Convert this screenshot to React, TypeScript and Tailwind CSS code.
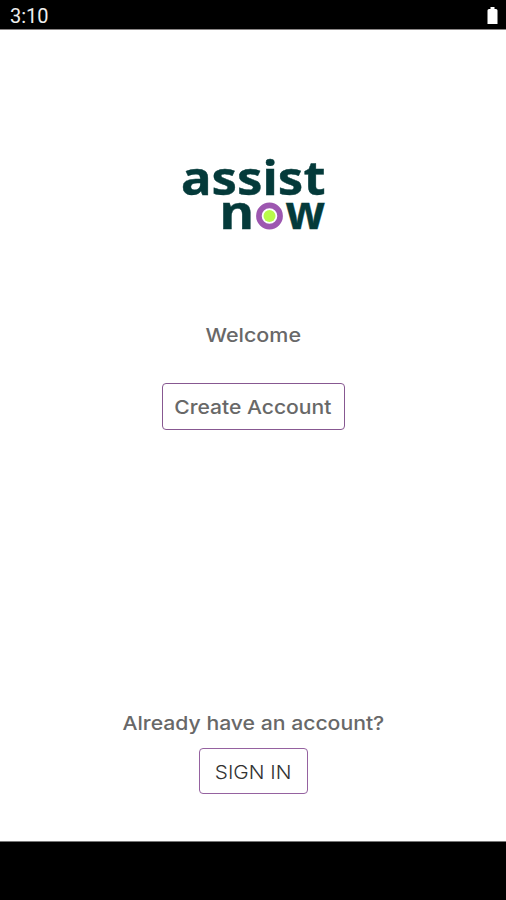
function Logo() {
  return (
    <svg className="mt-[110px] block h-[110px] w-[170px] shrink-0 overflow-visible" viewBox="168 140 170 110" role="img" aria-label="assist now">
      <g fill="#043a3a" stroke="#043a3a" strokeWidth="0.4" fontFamily="'Noto Sans', 'Open Sans', sans-serif" fontWeight="700" fontSize="47">
        <text x="181" y="194.600" textLength="144.500" lengthAdjust="spacingAndGlyphs">assist</text>
        <text x="219.500" y="229" textLength="34.500" lengthAdjust="spacingAndGlyphs">n</text>
        <text x="285.500" y="229" textLength="39.500" lengthAdjust="spacingAndGlyphs">w</text>
      </g>
      <circle cx="269.5" cy="216" r="10.600" fill="white" stroke="#9d57b0" strokeWidth="5.600" />
      <circle cx="269.5" cy="216" r="6" fill="#b9fb4b" />
    </svg>
  );
}

export default function App() {
  return (
    <div className="flex h-[900px] w-full flex-col bg-white font-[Inter,sans-serif] text-[#686868]">
      <header className="flex h-[30px] shrink-0 items-center justify-between border-b border-[#8a8686] bg-black pt-[3px] pr-[8px] pl-[10px] text-white">
        <span className="font-[Roboto,sans-serif] text-[20px] leading-[28px] text-[#eee]">3:10</span>
        <svg className="mb-[2px] h-[17px] w-[11px]" viewBox="0 0 11 17" fill="white">
          <path d="M3.500 0h4v2h1.500q1.500 0 1.500 1.500v13.500h-10v-13.500q0-1.500 1.500-1.500h1.500z" />
        </svg>
      </header>
      <main className="flex min-h-0 flex-1 flex-col items-center">
        <Logo />
        <p className="mt-[74px] scale-x-[1.13] text-[19px] leading-[24px] font-medium">Welcome</p>
        <button className="mt-[35px] flex h-[47px] w-[183px] shrink-0 items-center justify-center rounded-[4px] border border-[#875891] pt-[4px] text-[19px] font-medium whitespace-nowrap">
          <span className="scale-x-[1.11]">Create Account</span>
        </button>
        <p className="mt-[282px] scale-x-[1.115] text-[19px] leading-[24px] font-medium">Already have an account?</p>
        <button className="mt-[12px] flex h-[46px] w-[109px] shrink-0 items-center justify-center rounded-[4px] border border-[#9562a0] pt-[4px] text-[19px] font-light text-[#333] whitespace-nowrap">
          <span className="scale-x-[1.09]">SIGN IN</span>
        </button>
      </main>
      <footer className="h-[59px] shrink-0 border-t border-[#777] bg-black" />
    </div>
  );
}
